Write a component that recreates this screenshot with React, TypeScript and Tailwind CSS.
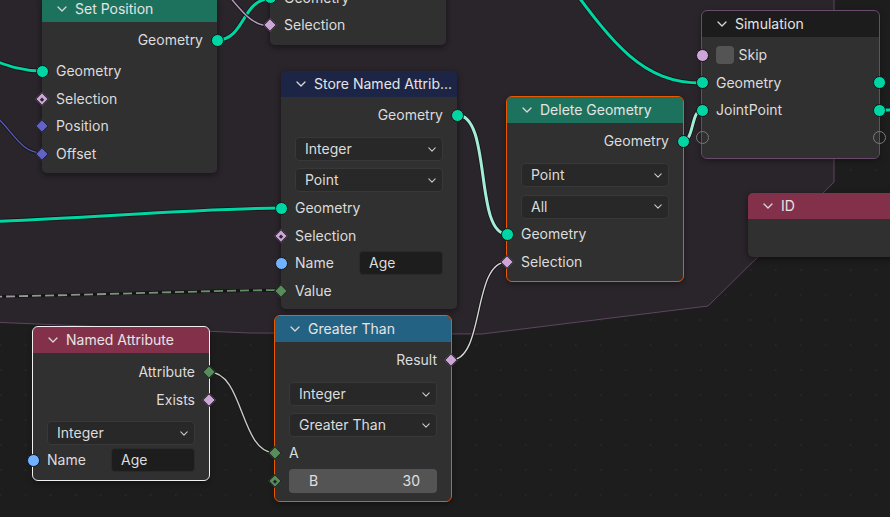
import React from 'react';

type Kind = 'circle' | 'diamond' | 'dot' | 'hollow';

type Sock = { kind: Kind; bg?: string };

const geo: Sock = { kind: 'circle', bg: 'bg-[#00d6a3]' };
const str: Sock = { kind: 'circle', bg: 'bg-[#70b2ff]' };
const boolC: Sock = { kind: 'circle', bg: 'bg-[#cca6d6]' };
const boolD: Sock = { kind: 'diamond', bg: 'bg-[#cca6d6]' };
const boolDot: Sock = { kind: 'dot', bg: 'bg-[#cca6d6]' };
const intD: Sock = { kind: 'diamond', bg: 'bg-[#598c5c]' };
const intDot: Sock = { kind: 'dot', bg: 'bg-[#598c5c]' };
const vecD: Sock = { kind: 'diamond', bg: 'bg-[#6363c7]' };
const empty: Sock = { kind: 'hollow' };

function Socket({ s, side }: { s: Sock; side: 'left' | 'right' }) {
  const place =
    side === 'left'
      ? 'absolute left-0 top-1/2 -translate-x-1/2 -translate-y-1/2 flex items-center justify-center'
      : 'absolute right-0 top-1/2 translate-x-1/2 -translate-y-1/2 flex items-center justify-center';

  let inner: React.ReactElement;
  if (s.kind === 'circle') {
    inner = <div className={`w-[13px] h-[13px] rounded-full border border-[#141414] ${s.bg}`} />;
  } else if (s.kind === 'hollow') {
    inner = <div className="w-[13px] h-[13px] rounded-full border-[1.5px] border-[#7a7a7a]" />;
  } else {
    inner = (
      <div className={`w-[10px] h-[10px] rotate-45 border border-[#141414] flex items-center justify-center ${s.bg}`}>
        {s.kind === 'dot' && <div className="w-[3px] h-[3px] bg-[#262626]" />}
      </div>
    );
  }
  return <div className={`${place} w-[16px] h-[16px] z-10`}>{inner}</div>;
}

function Row({
  label,
  left,
  right,
  alignRight,
  children,
}: {
  label?: string;
  left?: Sock;
  right?: Sock;
  alignRight?: boolean;
  children?: React.ReactNode;
}) {
  return (
    <div className={`relative h-[27.5px] flex items-center px-[14px] ${alignRight ? 'justify-end' : 'justify-start'}`}>
      {left && <Socket s={left} side="left" />}
      {label && <span className="whitespace-nowrap">{label}</span>}
      {children}
      {right && <Socket s={right} side="right" />}
    </div>
  );
}

function Chevron({ className }: { className: string }) {
  return (
    <svg className={className} viewBox="0 0 10 6" fill="none">
      <path d="M1 1 L5 5 L9 1" stroke="currentColor" strokeWidth="1.3" strokeLinecap="round" strokeLinejoin="round" />
    </svg>
  );
}

function Select({ label, gap }: { label: string; gap: string }) {
  return (
    <div
      className={`mx-[14px] ${gap} h-[24px] rounded-[4px] bg-[#282828] border border-[#383838] flex items-center justify-between pl-[9px] pr-[6px] text-[#dcdcdc]`}
    >
      <span>{label}</span>
      <Chevron className="w-[8px] h-[5px] text-[#cfcfcf]" />
    </div>
  );
}

function TextField({ value }: { value: string }) {
  return (
    <div className="ml-auto w-[84px] h-[24px] rounded-[4px] bg-[#1d1d1d] border border-[#2a2a2a] flex items-center pl-[9px] text-[#dcdcdc]">
      {value}
    </div>
  );
}

function Node({
  pos,
  head,
  title,
  edge,
  body,
  children,
}: {
  pos: string;
  head: string;
  title: string;
  edge?: string;
  body: string;
  children?: React.ReactNode;
}) {
  return (
    <div className={`absolute ${pos} w-[176px] rounded-[5px] shadow-[0_2px_6px_rgba(0,0,0,0.45)] ${edge ?? ''}`}>
      <div className={`h-[26px] rounded-t-[5px] flex items-center pl-[15px] gap-[8px] text-[#e4e4e4] ${head}`}>
        <Chevron className="w-[10px] h-[6px] text-[#d8d8d8]" />
        <span className="whitespace-nowrap">{title}</span>
      </div>
      <div className={`bg-[#303030] rounded-b-[5px] text-[#dcdcdc] ${body}`}>{children}</div>
    </div>
  );
}

function Wire({ d, color, w }: { d: string; color: string; w: number }) {
  return (
    <g fill="none" strokeLinecap="round">
      <path d={d} stroke="#151515" strokeWidth={w + 1.6} />
      <path d={d} stroke={color} strokeWidth={w} />
    </g>
  );
}

function Canvas() {
  return (
    <svg className="absolute inset-0" width="890" height="517" viewBox="0 0 890 517">
      <defs>
        <pattern id="dots" x="-12" y="8" width="25" height="25" patternUnits="userSpaceOnUse">
          <circle cx="12.7" cy="12" r="1" fill="#272727" />
        </pattern>
        <linearGradient id="valueWire" x1="0" y1="0" x2="281" y2="0" gradientUnits="userSpaceOnUse">
          <stop offset="0" stopColor="#9a9a9a" />
          <stop offset="1" stopColor="#598c5c" />
        </linearGradient>
      </defs>
      <rect width="890" height="517" fill="url(#dots)" />
      <path
        d="M -10 -10 L 834 -10 L 834 182 L 708 306 L 482 334 L 250 333 L -10 322 Z"
        fill="#2a242b"
        stroke="#5e4660"
        strokeWidth="1"
      />

      <Wire d="M -30 52 C 0 62, 15 71, 42 71" color="#00d6a3" w={3} />
      <Wire d="M 217 40 C 245 40, 242 -1, 270 -1" color="#00d6a3" w={3} />
      <Wire d="M 222 -12 C 240 8, 250 26, 270 26" color="#b49cc0" w={1.4} />
      <Wire d="M -14 108 C 12 126, 18 153, 42 153" color="#5b59bd" w={1.4} />
      <Wire d="M -20 222 C 90 218, 190 209, 281 208" color="#00d6a3" w={3} />
      <g fill="none">
        <path d="M -20 297 C 90 295, 190 291, 281 290" stroke="#151515" strokeWidth="3.2" />
        <path d="M -20 297 C 90 295, 190 291, 281 290" stroke="url(#valueWire)" strokeWidth="1.8" strokeDasharray="9 4" />
      </g>
      <Wire d="M 457 115 C 492 115, 474 234, 507 234" color="#a4ecd6" w={3} />
      <Wire d="M 683 141 C 694 141, 691 110, 702 110" color="#a4ecd6" w={3} />
      <Wire d="M 560 -28 C 612 42, 640 83, 702 83" color="#00d6a3" w={3} />
      <Wire d="M 879 110 L 900 110" color="#00d6a3" w={3} />
      <Wire d="M 209 372 C 244 372, 240 453, 275 453" color="#c4cbc4" w={1.4} />
      <Wire d="M 451 360 C 485 360, 472 262, 507 262" color="#d6d6d6" w={1.4} />
    </svg>
  );
}

export default function App() {
  return (
    <div className="relative w-[890px] h-[517px] overflow-hidden bg-[#1d1d1d] font-['Inter','Noto_Sans',sans-serif] text-[14px] leading-none">
      <Canvas />

      <Node pos="left-[270px] top-[-120px]" head="bg-[#1d725e]" title="Join" body="pt-[4px] pb-[6px] h-[139px] flex flex-col justify-end">
        <Row label="Geometry" left={geo} />
        <Row label="Selection" left={boolD} />
      </Node>

      <Node pos="left-[42px] top-[-4px] !w-[175px]" head="bg-[#1d725e]" title="Set Position" body="pt-[4.25px] pb-[6px]">
        <Row label="Geometry" right={geo} alignRight />
        <div className="mt-[3.5px]">
          <Row label="Geometry" left={geo} />
          <Row label="Selection" left={boolDot} />
          <Row label="Position" left={vecD} />
          <Row label="Offset" left={vecD} />
        </div>
      </Node>

      <Node pos="left-[281px] top-[71px]" head="bg-[#1d2546]" title="Store Named Attrib..." body="pt-[4.25px] pb-[4.75px]">
        <Row label="Geometry" right={geo} alignRight />
        <Select label="Integer" gap="mt-[8.25px]" />
        <Select label="Point" gap="mt-[7px]" />
        <div className="mt-[2.25px]">
          <Row label="Geometry" left={geo} />
          <Row label="Selection" left={boolDot} />
          <Row label="Name" left={str}>
            <TextField value="Age" />
          </Row>
          <Row label="Value" left={intD} />
        </div>
      </Node>

      <Node
        pos="left-[507px] top-[97px]"
        head="bg-[#1d725e]"
        title="Delete Geometry"
        edge="outline-[1.5px] outline-solid outline-[#ed5700]"
        body="pt-[4.25px] pb-[5.75px]"
      >
        <Row label="Geometry" right={geo} alignRight />
        <Select label="Point" gap="mt-[8.25px]" />
        <Select label="All" gap="mt-[7.5px]" />
        <div className="mt-[1.75px]">
          <Row label="Geometry" left={geo} />
          <Row label="Selection" left={boolD} />
        </div>
      </Node>

      <Node
        pos="left-[702px] top-[11px] !w-[177px]"
        head="bg-[#1c1c1c]"
        title="Simulation"
        edge="outline-1 outline-solid outline-[#6a4b6d]"
        body="pt-[4.25px] pb-[6.5px]"
      >
        <Row left={boolC}>
          <div className="w-[17.5px] h-[17.5px] rounded-[4px] bg-[#545454] mr-[5px]" />
          <span>Skip</span>
        </Row>
        <Row label="Geometry" left={geo} right={geo} />
        <Row label="JointPoint" left={geo} right={geo} />
        <Row left={empty} right={empty} />
      </Node>

      <Node pos="left-[748px] top-[193px]" head="bg-[#83314a]" title="ID" body="h-[38px]" />

      <Node
        pos="left-[33px] top-[327px]"
        head="bg-[#83314a]"
        title="Named Attribute"
        edge="outline-[1.5px] outline-solid outline-[#f0f0f0]"
        body="pt-[5.25px] pb-[6.25px]"
      >
        <Row label="Attribute" right={intD} alignRight />
        <Row label="Exists" right={boolD} alignRight />
        <Select label="Integer" gap="mt-[8px]" />
        <div className="mt-[1.25px]">
          <Row label="Name" left={str}>
            <TextField value="Age" />
          </Row>
        </div>
      </Node>

      <Node
        pos="left-[275px] top-[316px]"
        head="bg-[#246283]"
        title="Greater Than"
        edge="outline-[1.5px] outline-solid outline-[#ed5700]"
        body="pt-[4.25px] pb-[6.5px]"
      >
        <Row label="Result" right={boolD} alignRight />
        <Select label="Integer" gap="mt-[8.25px]" />
        <Select label="Greater Than" gap="mt-[7px]" />
        <div className="mt-[2.25px]">
          <Row label="A" left={intD} />
          <Row left={intDot}>
            <div className="w-full h-[24px] rounded-[4px] bg-[#545454] flex items-center justify-between pl-[20px] pr-[17px] text-[#e0e0e0]">
              <span>B</span>
              <span>30</span>
            </div>
          </Row>
        </div>
      </Node>
    </div>
  );
}
